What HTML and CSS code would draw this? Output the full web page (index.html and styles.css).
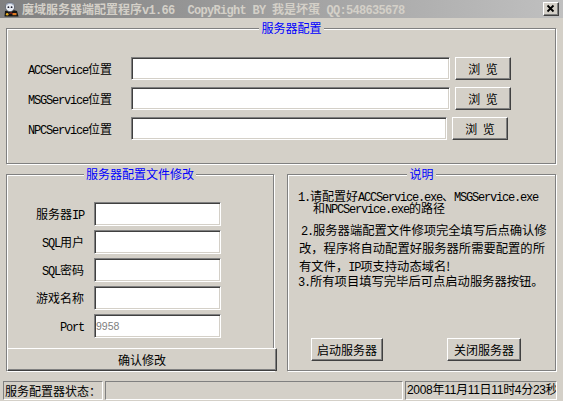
FILE: index.html
```html
<!DOCTYPE html>
<html lang="zh-CN">
<head>
<meta charset="utf-8">
<title>魔域服务器端配置程序</title>
<link rel="stylesheet" href="styles.css">
</head>
<body>
<div class="titlebar">
  <svg class="appicon" viewBox="0 0 16 16" aria-hidden="true">
    <path d="M2 10 L8 8.5 L14 10 L15.5 15.5 L1.5 15.5 Z" fill="#151515"/>
    <circle cx="7" cy="6" r="4.6" fill="#e6eaf0" stroke="#5a5f6a" stroke-width="0.8"/>
    <path d="M3 4 Q7 0.5 11 4" fill="none" stroke="#9aa4b8" stroke-width="1.2"/>
    <circle cx="5.4" cy="6.2" r="0.9" fill="#202030"/>
    <circle cx="8.6" cy="6.2" r="0.9" fill="#202030"/>
    <path d="M9.5 12 h4 v2.2 h-4 z" fill="#e07a20"/>
    <circle cx="4.2" cy="13.2" r="1.3" fill="#e8b020"/>
    <path d="M6.5 13 l1.5 -1.5 l1.5 1.5" fill="none" stroke="#c03020" stroke-width="1"/>
  </svg>
  <div class="title">魔域服务器端配置程序<span class="m">v1.66  CopyRight BY </span>我是坏蛋<span class="m"> QQ:548635678</span></div>
  <div class="closebtn raised">
    <svg viewBox="0 0 14 12" aria-hidden="true"><path d="M3.5 2.5 L9.5 8.5 M9.5 2.5 L3.5 8.5" stroke="#000" stroke-width="1.8" fill="none"/></svg>
  </div>
</div>

<div class="group g1">
  <div class="gtitle">服务器配置</div>
  <div class="paths">
    <div class="prow">
      <span class="plabel"><span class="m">ACCService</span>位置</span>
      <input class="field pfield" type="text">
      <button class="btn raised browse">浏 览</button>
    </div>
    <div class="prow">
      <span class="plabel"><span class="m">MSGService</span>位置</span>
      <input class="field pfield" type="text">
      <button class="btn raised browse">浏 览</button>
    </div>
    <div class="prow">
      <span class="plabel"><span class="m">NPCService</span>位置</span>
      <input class="field pfield short" type="text">
      <button class="btn raised browse">浏 览</button>
    </div>
  </div>
</div>

<div class="middle">
  <div class="group g2">
    <div class="gtitle">服务器配置文件修改</div>
    <div class="form">
      <span class="flabel">服务器<span class="m">IP</span></span>
      <input class="field" type="text">
      <span class="flabel"><span class="m">SQL</span>用户</span>
      <input class="field" type="text">
      <span class="flabel"><span class="m">SQL</span>密码</span>
      <input class="field" type="text">
      <span class="flabel">游戏名称</span>
      <input class="field" type="text">
      <span class="flabel"><span class="m">Port</span></span>
      <input class="field port" type="text" value="9958">
    </div>
    <button class="btn raised confirm">确认修改</button>
  </div>

  <div class="group g3">
    <div class="gtitle">说明</div>
    <div class="note1">
      <div><span class="m">1.</span>请配置好<span class="m">ACCService.exe</span>、<span class="m">MSGService.exe</span></div>
      <div class="indent">和<span class="m">NPCService.exe</span>的路径</div>
    </div>
    <div class="note2">
      <div class="lead"><span class="m">2.</span>服务器端配置文件修项完全填写后点确认修</div>
      <div>改，程序将自动配置好服务器所需要配置的所</div>
      <div>有文件，<span class="m">IP</span>项支持动态域名!</div>
    </div>
    <div class="note3"><span class="m">3.</span>所有项目填写完毕后可点启动服务器按钮。</div>
    <div class="srvbtns">
      <button class="btn raised start">启动服务器</button>
      <button class="btn raised stop">关闭服务器</button>
    </div>
  </div>
</div>

<div class="statusbar">
  <div class="spanel sp1">服务配置器状态：</div>
  <div class="spanel sp2"></div>
  <div class="spanel sp3">2008年11月11日11时4分23秒</div>
</div>
</body>
</html>
```

FILE: styles.css
```css
* { box-sizing: border-box; }
html, body { margin: 0; padding: 0; }
body {
  width: 563px;
  height: 401px;
  overflow: hidden;
  background: #d4d0c8;
  color: #000;
  font-family: "Noto Sans CJK SC", sans-serif;
  font-size: 12px;
  line-height: 12px;
}
.m {
  font-family: "Liberation Mono", monospace;
  font-size: 12px;
  letter-spacing: -1.2px;
  line-height: 0;
}

/* title bar */
.titlebar {
  height: 18px;
  display: flex;
  align-items: center;
  padding-left: 3px;
  background: linear-gradient(to right, #808080, #c0c0c0);
}
.appicon { width: 16px; height: 16px; flex: none; }
.title {
  flex: 1;
  margin-left: 3px;
  color: #d4d0c8;
  font-weight: bold;
  white-space: pre;
  line-height: 18px;
}
.title .m { font-weight: bold; letter-spacing: -0.7px; }
.closebtn {
  width: 16px;
  height: 14px;
  margin-right: 4px;
  display: flex;
  align-items: center;
  justify-content: center;
}
.closebtn svg { width: 14px; height: 12px; }

/* 3D borders */
.raised {
  background: #d4d0c8;
  border: 1px solid;
  border-color: #fff #404040 #404040 #fff;
  box-shadow: inset -1px -1px 0 #808080;
}
.field {
  display: block;
  margin: 0;
  padding: 0 1px;
  background: #fff;
  border: 1px solid;
  border-color: #808080 #fff #fff #808080;
  box-shadow: inset 1px 1px 0 #404040, inset -1px -1px 0 #d4d0c8;
  outline: none;
  font: inherit;
  color: #000;
}
.btn {
  margin: 0;
  padding: 0;
  font: inherit;
  line-height: 12px;
  color: #000;
  cursor: default;
}

/* group boxes */
.group {
  border: 1px solid #808080;
  box-shadow: inset 1px 1px 0 #fff, 1px 1px 0 #fff;
}
.gtitle {
  display: table;
  margin: -7px auto 0;
  padding: 0 2px;
  background: #d4d0c8;
  color: #0000ff;
  line-height: 12px;
}

.g1 {
  margin: 10px 0 0 6px;
  width: 550px;
  height: 136px;
  padding-left: 21px;
}
.paths {
  margin-top: 23px;
  display: flex;
  flex-direction: column;
  gap: 7px;
}
.prow { display: flex; align-items: center; height: 23px; }
.plabel { width: 103px; white-space: nowrap; }
.pfield { width: 319px; height: 23px; }
.pfield.short { width: 316px; }
.browse { width: 56px; height: 23px; margin-left: 5px; word-spacing: 3px; }

.middle {
  display: flex;
  margin: 10px 0 0 6px;
}
.g2 { width: 268px; }
.form {
  margin-top: 22px;
  display: grid;
  grid-template-columns: 87px 127px;
  grid-auto-rows: 24px;
  row-gap: 4px;
  align-items: center;
}
.flabel { text-align: right; padding-right: 10px; white-space: nowrap; }
.form .field { height: 24px; width: 127px; }
.field.port {
  color: #808080;
  font-family: "Liberation Sans", sans-serif;
  font-size: 10.5px;
}
.confirm {
  display: block;
  margin: 10px 0 -1px 0;
  width: 270px;
  height: 23px;
}

.g3 {
  width: 269px;
  margin-left: 13px;
  display: flex;
  flex-direction: column;
  padding-bottom: 9px;
}
.note1 { margin-top: 10px; padding-left: 10px; line-height: 12px; white-space: nowrap; }
.note1 .indent { padding-left: 15px; }
.note2 {
  margin-top: 7px;
  padding-left: 11px;
  font-size: 12.3px;
  line-height: 18px;
  white-space: nowrap;
}
.note2 .lead { text-indent: 2px; }
.note3 {
  padding-left: 10px;
  font-size: 12.3px;
  line-height: 12px;
  white-space: nowrap;
}
.srvbtns {
  margin-top: auto;
  display: flex;
  justify-content: space-between;
  padding: 0 34px 0 23px;
}
.start { width: 72px; height: 23px; }
.stop { width: 74px; height: 23px; }

/* status bar */
.statusbar {
  display: flex;
  height: 19px;
  margin-top: 10px;
  padding-left: 3px;
}
.spanel {
  height: 19px;
  border: 1px solid;
  border-color: #808080 #fff #fff #808080;
  line-height: 17px;
  padding-left: 1px;
  white-space: nowrap;
  overflow: hidden;
}
.sp1 { width: 100px; }
.sp2 { width: 298px; margin-left: 2px; }
.sp3 {
  width: 152px;
  margin-left: 2px;
  font-family: "Liberation Sans", "Noto Sans CJK SC", sans-serif;
  letter-spacing: -0.3px;
}
```
